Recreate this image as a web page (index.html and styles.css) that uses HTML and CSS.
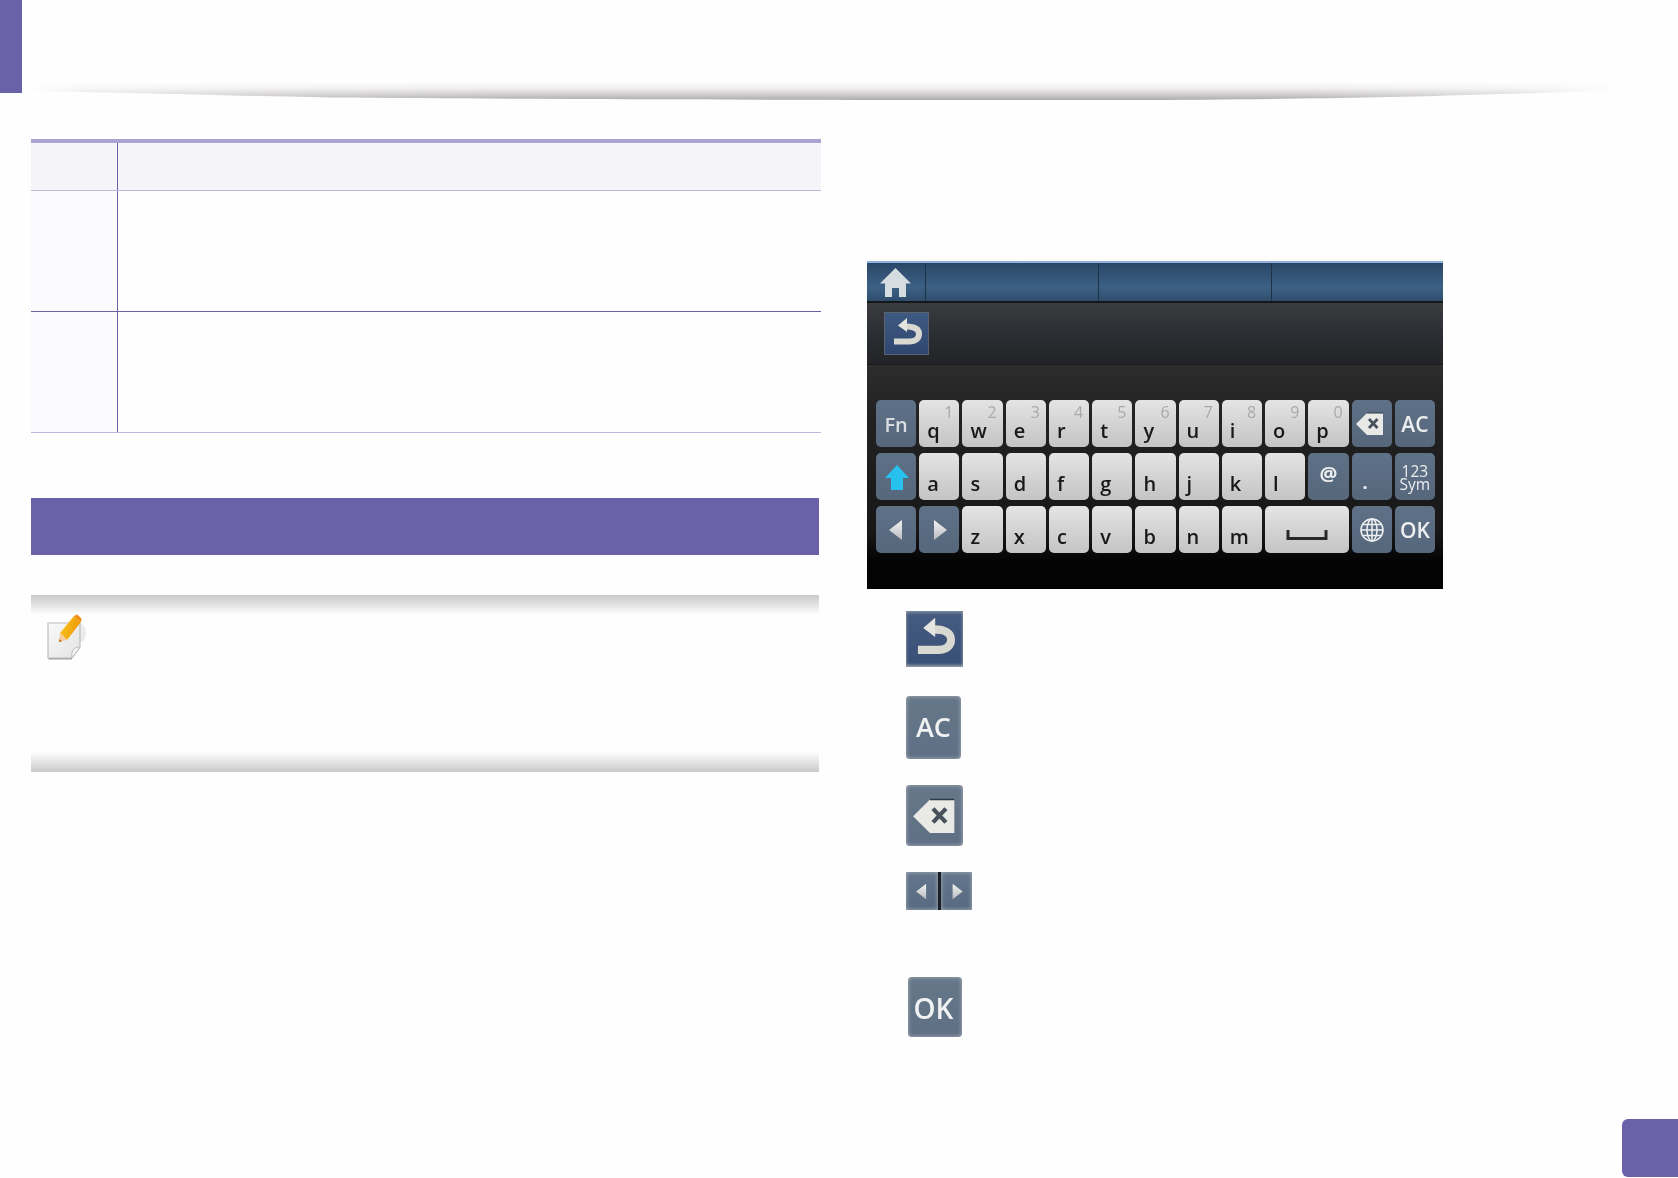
FILE: index.html
```html
<!DOCTYPE html>
<html lang="en">
<head>
<meta charset="utf-8">
<title>Keyboard</title>
<link rel="stylesheet" href="styles.css">
</head>
<body>
<svg class="defs" width="0" height="0" aria-hidden="true">
  <defs>
    <linearGradient id="tri" x1="0" y1="0" x2="0" y2="1"><stop offset="0" stop-color="#f2f2f2"/><stop offset="1" stop-color="#b9bcc0"/></linearGradient>
    <linearGradient id="sheen" gradientUnits="userSpaceOnUse" x1="0" y1="0" x2="0" y2="18"><stop offset="0" stop-color="#fefefe"/><stop offset="0.35" stop-color="#f0eeee"/><stop offset="0.7" stop-color="#cfcdcd"/><stop offset="1" stop-color="#adabab"/></linearGradient>
    <linearGradient id="fade" x1="0" y1="0" x2="1" y2="0"><stop offset="0" stop-color="#000"/><stop offset="0.04" stop-color="#777"/><stop offset="0.14" stop-color="#ccc"/><stop offset="0.3" stop-color="#fff"/><stop offset="0.8" stop-color="#fff"/><stop offset="0.92" stop-color="#aaa"/><stop offset="1" stop-color="#000"/></linearGradient>
    <mask id="fademask" maskUnits="userSpaceOnUse" x="0" y="0" width="1600" height="18"><rect width="1600" height="18" fill="url(#fade)"/></mask>
    <linearGradient id="pen" x1="0" y1="0" x2="1" y2="0.3"><stop offset="0" stop-color="#f8c81e"/><stop offset="1" stop-color="#ef9a0c"/></linearGradient>
    <linearGradient id="paper" x1="0" y1="0" x2="1" y2="1"><stop offset="0" stop-color="#fafafa"/><stop offset="1" stop-color="#e2e2e2"/></linearGradient>
    <symbol id="i-back" viewBox="0 0 43 41">
      <path d="M9 28.500H24C31 28.500 34 25 34 21C34 16.500 30 13.500 21 13.500" fill="none" stroke="#d9d9d2" stroke-width="6"/>
      <path d="M22 5L13 12.500L22 19Z" fill="#e6e6e0"/>
    </symbol>
    <symbol id="i-del" viewBox="0 0 40 47">
      <path d="M4 24L15 13H31V35H15Z" fill="#e9e9e6"/>
      <path d="M15 13H31" stroke="#2f3a46" stroke-width="1"/>
      <path d="M17 19L25.500 28M25.500 19L17 28" stroke="#48525c" stroke-width="2.800"/>
    </symbol>
    <symbol id="i-left" viewBox="0 0 40 47"><path d="M26 14V34L13 24Z" fill="url(#tri)"/></symbol>
    <symbol id="i-right" viewBox="0 0 40 47"><path d="M15 14V34L28 24Z" fill="url(#tri)"/></symbol>
  </defs>
</svg>
<div class="page">
  <header class="header">
    <div class="tab"></div>
    <svg class="sheen" width="1600" height="18" viewBox="0 0 1600 18" aria-hidden="true">
      <path d="M0 9C60 10 140 12 306 15.500C530 17.500 800 18 1100 18C1250 17.500 1354 15.500 1441 13C1520 11 1570 9 1600 7V0H0Z" fill="url(#sheen)" mask="url(#fademask)"/>
    </svg>
  </header>
  <main class="main">
    <section class="left">
      <div class="tbl">
        <div class="row row-head"><div class="cell-a"></div><div></div></div>
        <div class="row row-body row-strong"><div class="cell-a"></div><div></div></div>
        <div class="row row-body"><div class="cell-a"></div><div></div></div>
      </div>
      <div class="section-bar"></div>
      <div class="note">
        <svg class="note-icon" width="40" height="46" viewBox="0 0 40 46" aria-hidden="true">
          <ellipse cx="34" cy="19" rx="5" ry="9" fill="#ececec"/>
          <path d="M1 9H33V33L25 44H1Z" fill="url(#paper)" stroke="#bdbdbd" stroke-width="1.200"/>
          <path d="M25 44C24 38 26 33 33 33Z" fill="#f7f7f7" stroke="#bdbdbd" stroke-width="1"/>
          <path d="M1.500 44.800H25" stroke="#a8a8a8" stroke-width="1.500"/>
          <path d="M13 19L27 2L34 8L20 26Z" fill="url(#pen)"/>
          <path d="M13 19L12 28L20 26Z" fill="#f3cda0"/>
          <path d="M12 28L12.400 25L15 27.200Z" fill="#b8690e"/>
          <path d="M27 2L30 0.500L34.500 4.500L34 8Z" fill="#f08a10"/>
        </svg>
      </div>
    </section>
    <section class="right">
      <div class="kb">
        <div class="kb-top">
          <div class="kb-home">
            <svg width="33" height="31" viewBox="0 0 33 31" aria-hidden="true">
              <path d="M16.500 1L32 16.500H27V30H20V21H13V30H6V16.500H1Z" fill="#d6dde0"/>
            </svg>
          </div>
          <div class="kb-tabcell"></div>
          <div class="kb-tabcell"></div>
          <div class="kb-tabcell kb-tabcell-last"></div>
        </div>
        <div class="kb-title">
          <div class="kb-back"><svg width="43" height="41" aria-hidden="true"><use href="#i-back"/></svg></div>
        </div>
        <div class="kb-body">
          <div class="keys">
            <div class="key dark label fn">Fn</div>
            <div class="key"><span>q</span><sup>1</sup></div>
            <div class="key"><span>w</span><sup>2</sup></div>
            <div class="key"><span>e</span><sup>3</sup></div>
            <div class="key"><span>r</span><sup>4</sup></div>
            <div class="key"><span>t</span><sup>5</sup></div>
            <div class="key"><span>y</span><sup>6</sup></div>
            <div class="key"><span>u</span><sup>7</sup></div>
            <div class="key"><span>i</span><sup>8</sup></div>
            <div class="key"><span>o</span><sup>9</sup></div>
            <div class="key"><span>p</span><sup>0</sup></div>
            <div class="key dark icon"><svg width="40" height="47" aria-hidden="true"><use href="#i-del"/></svg></div>
            <div class="key dark label">AC</div>

            <div class="key dark icon"><svg width="40" height="47" viewBox="0 0 40 47" aria-hidden="true"><path d="M21 12L33 25H27V37H15V25H9Z" fill="#27c1f0"/></svg></div>
            <div class="key"><span>a</span></div>
            <div class="key"><span>s</span></div>
            <div class="key"><span>d</span></div>
            <div class="key"><span>f</span></div>
            <div class="key"><span>g</span></div>
            <div class="key"><span>h</span></div>
            <div class="key"><span>j</span></div>
            <div class="key"><span>k</span></div>
            <div class="key"><span>l</span></div>
            <div class="key dark label at">@</div>
            <div class="key dark label dot">.</div>
            <div class="key dark label sym">123<br>Sym</div>

            <div class="key dark icon"><svg width="40" height="47" aria-hidden="true"><use href="#i-left"/></svg></div>
            <div class="key dark icon"><svg width="40" height="47" aria-hidden="true"><use href="#i-right"/></svg></div>
            <div class="key"><span>z</span></div>
            <div class="key"><span>x</span></div>
            <div class="key"><span>c</span></div>
            <div class="key"><span>v</span></div>
            <div class="key"><span>b</span></div>
            <div class="key"><span>n</span></div>
            <div class="key"><span>m</span></div>
            <div class="key icon wide"><svg width="44" height="12" viewBox="0 0 44 12" aria-hidden="true"><path d="M3 1V9.500H41V1" fill="none" stroke="#26282b" stroke-width="3"/></svg></div>
            <div class="key dark icon"><svg width="26" height="26" viewBox="0 0 26 26" aria-hidden="true"><g fill="none" stroke="#eef0f0" stroke-width="1.500"><circle cx="13" cy="13" r="11"/><ellipse cx="13" cy="13" rx="5" ry="11"/><path d="M2 13H24M13 2V24M4 7.500H22M4 18.500H22"/></g></svg></div>
            <div class="key dark label">OK</div>
          </div>
        </div>
      </div>
      <ul class="legend">
        <li class="lg-back"><svg width="57" height="56" viewBox="0 0 43 41" preserveAspectRatio="none" aria-hidden="true"><use href="#i-back"/></svg></li>
        <li class="lg-key lg-ac">AC</li>
        <li class="lg-key lg-del"><svg width="57" height="61" viewBox="0 3.500 36 40" aria-hidden="true"><use href="#i-del" width="40" height="47"/></svg></li>
        <li class="lg-arrows">
          <div class="lg-arrow"><svg width="31" height="38" viewBox="0 0 40 47" aria-hidden="true"><use href="#i-left" width="40" height="47"/></svg></div>
          <div class="lg-arrow"><svg width="31" height="38" viewBox="0 0 40 47" aria-hidden="true"><use href="#i-right" width="40" height="47"/></svg></div>
        </li>
        <li class="lg-key lg-ok">OK</li>
      </ul>
    </section>
  </main>
  <footer class="footer"><div class="page-tab"></div></footer>
</div>
</body>
</html>
```
FILE: styles.css
```css
* { box-sizing: border-box; }
html, body { margin: 0; padding: 0; background: #fefefe; }
.defs { display: block; height: 0; }
.page {
  width: 1678px;
  height: 1178px;
  display: flex;
  flex-direction: column;
  overflow: hidden;
  font-family: "Open Sans", "Liberation Sans", sans-serif;
}

/* header */
.header { display: flex; height: 100px; flex: none; }
.tab { width: 22px; height: 93px; background: #6a62a9; flex: none; }
.sheen { align-self: flex-end; margin-left: 4px; flex: none; }

/* columns */
.main { flex: 1; display: flex; padding: 39px 0 0 31px; gap: 46px; min-height: 0; }
.left { width: 790px; flex: none; }
.right { width: 576px; flex: none; }

/* table */
.tbl { border-top: 4px solid #a9a4d0; }
.row { display: grid; grid-template-columns: 87px 1fr; border-bottom: 1px solid #bdb8de; }
.row-head { height: 48px; background: #f4f4f9; }
.row-body { height: 121px; }
.row-strong { border-bottom-color: #6a62a9; }
.cell-a { border-right: 1px solid #6a62a9; background: #fbfbfe; }
.row-head .cell-a { background: #f4f4f9; }

/* section */
.section-bar { width: 788px; height: 57px; margin-top: 65px; background: #6a62a9; }
.note {
  width: 788px;
  height: 177px;
  margin-top: 40px;
  padding: 19px 0 0 16px;
  background:
    linear-gradient(#c9c9c9, #fefefe) top / 100% 20px no-repeat,
    linear-gradient(#fefefe, #c9c9c9) bottom / 100% 20px no-repeat;
}
.note-icon { display: block; }

/* keyboard screenshot */
.kb {
  width: 576px;
  height: 328px;
  margin-top: 122px;
  display: flex;
  flex-direction: column;
  background: #000;
  filter: blur(0.4px);
}
.kb-top {
  height: 42px;
  flex: none;
  display: flex;
  border-top: 2px solid #8fb0dc;
  border-bottom: 2px solid #14181d;
  background: linear-gradient(#2a4768, #3c6185 65%, #2f4c6b);
}
.kb-home {
  width: 59px;
  flex: none;
  display: flex;
  align-items: center;
  justify-content: center;
  padding-right: 1px;
  border-right: 1px solid #1f3145;
}
.kb-tabcell { width: 173px; flex: none; border-right: 1px solid #1f3145; }
.kb-tabcell-last { flex: 1; border-right: 0; }
.kb-title {
  height: 62px;
  flex: none;
  padding: 10px 0 0 18px;
  border-bottom: 1px solid #17191b;
  background: linear-gradient(#3a3c40, #2b2e32 50%, #222427);
}
.kb-back {
  width: 43px;
  height: 41px;
  background: linear-gradient(#3f5a82, #2f4770);
  box-shadow: 0 0 0 1px #5a6470;
}
.kb-back svg { display: block; }
.kb-body {
  flex: 1;
  padding: 35px 8px 0 9px;
  background: linear-gradient(#2d2d2d, #232323 20%, #171717 75%, #030303 88%);
}
.keys {
  display: grid;
  grid-template-columns: repeat(13, minmax(0, 1fr));
  grid-auto-rows: 47px;
  gap: 6px 3px;
}

.key {
  display: flex;
  justify-content: space-between;
  padding: 0 6px 0 8px;
  border-radius: 5px;
  background: linear-gradient(#e4e4e4, #d2d2d2 55%, #c4c4c4);
  color: #16181a;
  font-size: 20px;
  font-weight: 600;
  line-height: 1;
}
.key span { align-self: flex-end; padding-bottom: 6px; }
.key sup {
  align-self: flex-start;
  margin-top: 4px;
  color: #a9a9a9;
  font-size: 16px;
  font-weight: 400;
  line-height: 1;
  vertical-align: baseline;
}
.key.dark { background: linear-gradient(#5f7187, #56677c); color: #eceeef; }
.key.label { align-items: center; justify-content: center; padding: 2px 0 0; font-size: 21px; font-weight: 600; }
.key.fn { font-size: 20px; color: #d9dde0; }
.key.at { font-size: 20px; font-weight: 700; padding: 0 0 6px; }
.key.dot { align-items: flex-end; font-size: 18px; font-weight: 700; padding: 0 13px 9px 0; }
.key.sym { font-size: 15.500px; font-weight: 400; line-height: 13px; text-align: center; }
.key.icon { align-items: center; justify-content: center; padding: 0; }
.key.wide { grid-column: span 2; padding-top: 10px; }

/* legend */
.legend { list-style: none; margin: 22px 0 0 39px; padding: 0; display: flex; flex-direction: column; filter: blur(0.5px); }
.legend svg { display: block; }
.lg-back {
  width: 57px;
  height: 56px;
  background: linear-gradient(#465b80, #3a4f76);
  box-shadow: inset 0 -2px 3px #9a9fa6, inset 0 2px 3px #7a8aa0;
}
.lg-key {
  display: flex;
  align-items: center;
  justify-content: center;
  border-radius: 4px;
  background: linear-gradient(#667789, #5f7085);
  box-shadow: inset 0 0 4px #b0b5bb;
  color: #f0f1f2;
  font-size: 27px;
  font-weight: 600;
}
.lg-ac { width: 55px; height: 63px; margin-top: 29px; padding-bottom: 2px; }
.lg-del { width: 57px; height: 61px; margin-top: 26px; }
.lg-arrows { width: 66px; height: 38px; margin-top: 26px; display: flex; justify-content: space-between; background: #1c2026; border-radius: 3px; }
.lg-arrow { width: 31.500px; background: linear-gradient(#63768c, #576a80); box-shadow: inset 0 0 4px #b0b5bb; }
.lg-ok { width: 54px; height: 60px; margin: 67px 0 0 2px; padding: 2px 3px 0 0; font-size: 28px; }

/* footer */
.footer { height: 59px; flex: none; display: flex; justify-content: flex-end; padding-bottom: 1px; }
.page-tab { width: 56px; height: 58px; background: #6a62a9; border-radius: 6px 0 0 6px; }
```
